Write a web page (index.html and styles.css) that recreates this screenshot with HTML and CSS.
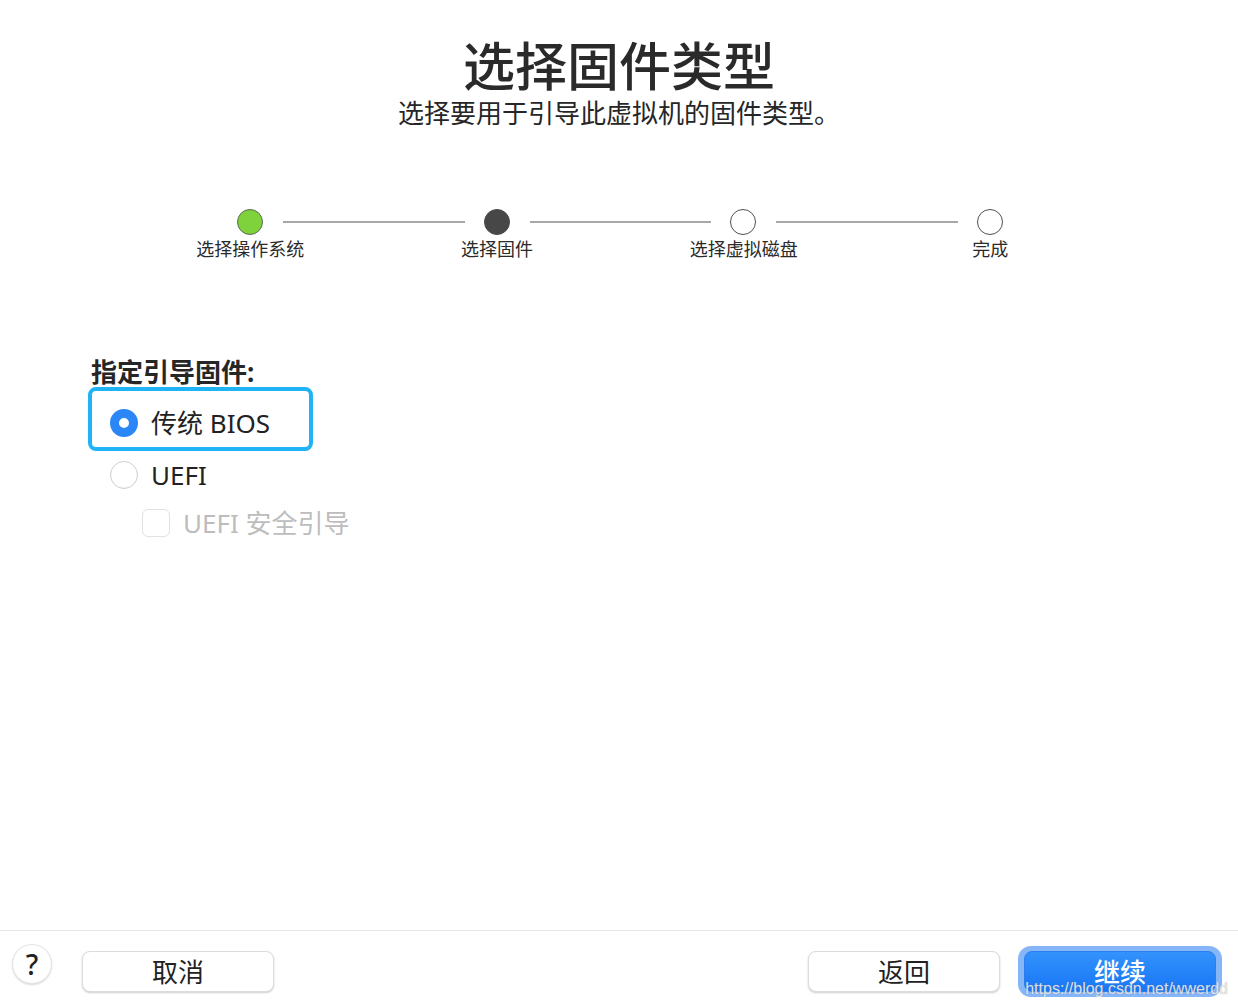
FILE: index.html
```html
<!DOCTYPE html>
<html>
  <head>
    <title>选择固件类型</title>
    <link rel="stylesheet" href="styles.css">
  </head>
  <body>
    <div class="window">
      <div class="header">
        <h1 class="title">选择固件类型</h1>
        <p class="subtitle">选择要用于引导此虚拟机的固件类型。</p>
      </div>

      <div class="steps">
        <div class="dots">
          <span class="dot done"></span>
          <span class="link"></span>
          <span class="dot current"></span>
          <span class="link"></span>
          <span class="dot"></span>
          <span class="link"></span>
          <span class="dot"></span>
        </div>
        <div class="labels">
          <span>选择操作系统</span>
          <span>选择固件</span>
          <span>选择虚拟磁盘</span>
          <span>完成</span>
        </div>
      </div>

      <div class="form">
        <div class="form-label">指定引导固件:</div>
        <div class="option focused">
          <span class="radio checked"></span>
          <span>传统 BIOS</span>
        </div>
        <div class="option">
          <span class="radio"></span>
          <span>UEFI</span>
        </div>
        <div class="option sub disabled">
          <span class="check"></span>
          <span>UEFI 安全引导</span>
        </div>
      </div>

      <div class="footer">
        <button class="help">?</button>
        <button class="btn cancel">取消</button>
        <div class="spacer"></div>
        <button class="btn">返回</button>
        <div class="primary-ring">
          <button class="btn primary">继续</button>
        </div>
        <span class="watermark">https://blog.csdn.net/wwerdd</span>
      </div>
    </div>
  </body>
</html>
```

FILE: styles.css
```css
body {
  margin: 0;
  background: #ffffff;
  font-family: "Noto Sans", "Noto Sans CJK SC", sans-serif;
  color: #262626;
}
.window {
  width: 1238px;
  height: 1008px;
  display: flex;
  flex-direction: column;
}
.header {
  padding-top: 38px;
  text-align: center;
}
.title {
  margin: 0;
  font-size: 52px;
  line-height: 56px;
  font-weight: 500;
  color: #2a2a2a;
}
.subtitle {
  margin: 4px 0 0;
  font-size: 26px;
  line-height: 30px;
  color: #262626;
}
.steps {
  margin-top: 81px;
}
.dots {
  display: flex;
  align-items: center;
  padding: 0 235px 0 237px;
}
.dot {
  width: 24px;
  height: 24px;
  border-radius: 50%;
  border: 1px solid #505050;
  background: #ffffff;
  flex: none;
}
.dot.done {
  background: #7fd23b;
  border-color: #5c6b52;
}
.dot.current {
  background: #474747;
  border-color: #474747;
}
.link {
  flex: 1;
  height: 2px;
  background: #a8a8a8;
  margin: 0 19px 0 20px;
}
.labels {
  display: grid;
  grid-template-columns: repeat(4, 246.67px);
  padding-left: 127px;
  margin-top: 2px;
  font-size: 18px;
  line-height: 24px;
  color: #2a2a2a;
}
.labels span {
  text-align: center;
}
.form {
  margin-top: 96px;
  padding-left: 88px;
}
.form-label {
  padding-left: 3px;
  font-size: 26px;
  line-height: 30px;
  font-weight: 700;
  color: #262626;
}
.option {
  display: flex;
  align-items: center;
  gap: 13px;
  font-size: 26px;
  line-height: 30px;
  color: #222222;
  padding-left: 22px;
  height: 48px;
}
.option.focused {
  box-sizing: border-box;
  width: 225px;
  height: 64px;
  padding: 8px 0 0 18px;
  border: 4px solid #20b4f7;
  border-radius: 8px;
}
.radio {
  box-sizing: border-box;
  width: 28px;
  height: 28px;
  border-radius: 50%;
  background: #ffffff;
  border: 1px solid #cfcfcf;
  box-shadow: inset 0 -1px 1px rgba(0, 0, 0, 0.04);
  flex: none;
}
.radio.checked {
  border: 9px solid #2b87f7;
  background: #ffffff;
}
.option.sub {
  padding-left: 54px;
  gap: 13px;
}
.check {
  box-sizing: border-box;
  width: 28px;
  height: 28px;
  border-radius: 6px;
  border: 1px solid #e2e2e2;
  background: #ffffff;
  flex: none;
}
.disabled {
  color: #bdbdbd;
}
.footer {
  margin-top: auto;
  height: 77px;
  border-top: 1px solid #e6e6e6;
  display: flex;
  align-items: flex-start;
  padding: 0 16px 0 12px;
  position: relative;
}
.help {
  width: 40px;
  height: 40px;
  margin-top: 13px;
  border-radius: 50%;
  border: 1px solid #e4e4e4;
  background: #ffffff;
  box-shadow: 0 1px 2px rgba(0, 0, 0, 0.15);
  font-family: "Noto Sans", sans-serif;
  font-size: 28px;
  font-weight: 500;
  line-height: 36px;
  color: #222222;
  padding: 0;
}
.btn {
  box-sizing: border-box;
  width: 192px;
  height: 41px;
  margin-top: 20px;
  border-radius: 8px;
  border: 1px solid #dcdcdc;
  background: #ffffff;
  box-shadow: 0 1px 2px rgba(0, 0, 0, 0.2);
  font-family: "Noto Sans", "Noto Sans CJK SC", sans-serif;
  font-size: 26px;
  line-height: 36px;
  color: #222222;
  padding: 0;
}
.cancel {
  margin-left: 30px;
}
.spacer {
  flex: 1;
}
.primary-ring {
  margin: 15px 0 0 18px;
  padding: 5px 6px;
  border-radius: 13px;
  background: #86b6f7;
  height: 41px;
}
.btn.primary {
  margin-top: 0;
  border: 1px solid #2a7ef0;
  background: linear-gradient(#3392fb, #1877f6);
  color: #ffffff;
  font-weight: 500;
  box-shadow: none;
}
.watermark {
  position: absolute;
  right: 10px;
  bottom: 10px;
  font-family: "Liberation Sans", sans-serif;
  font-size: 16px;
  color: rgba(236, 236, 236, 0.9);
  text-shadow: 0 0 1px rgba(120, 120, 120, 0.6);
}
```
